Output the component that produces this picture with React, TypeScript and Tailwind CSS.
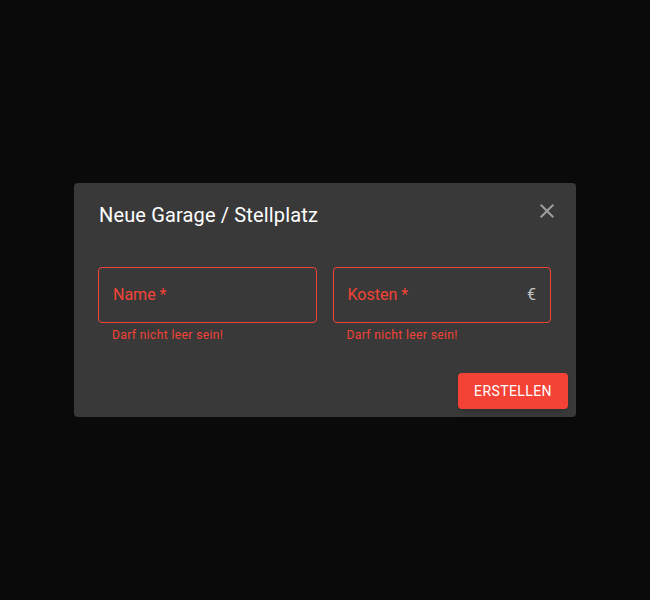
import React from "react";

const font = { fontFamily: "Roboto, 'Liberation Sans', sans-serif" };

const Field = ({ label, adornment }: { label: string; adornment?: string }) => (
  <div className="flex-1">
    <div className="h-[56px] rounded-[4px] border border-[#f44336] flex items-center pl-[14px] pr-[14px]">
      <span className="flex-1 text-[16px] text-[#f44336] leading-none">{label}</span>
      {adornment && <span className="text-[16px] text-[#c4c4c4] leading-none">{adornment}</span>}
    </div>
    <p className="mt-[2px] px-[14px] text-[12px] leading-[20px] tracking-[0.4px] text-[#f44336]">
      Darf nicht leer sein!
    </p>
  </div>
);

export default function App() {
  return (
    <div style={font} className="w-[650px] h-[600px] bg-[#0a0a0a] flex items-center justify-center">
      <div className="relative w-[502px] rounded-[4px] bg-[#393939]">
        <h2 className="pl-[25px] pr-6 py-4 text-[20px] leading-[32px] font-normal text-white tracking-[0.15px]">
          Neue Garage / Stellplatz
        </h2>
        <button className="absolute right-[17px] top-[16px] w-[24px] h-[24px] text-[#9e9e9e]">
          <svg viewBox="0 0 24 24" className="w-6 h-6" fill="currentColor">
            <path d="M19 6.41 17.59 5 12 10.59 6.41 5 5 6.41 10.59 12 5 17.59 6.41 19 12 13.41 17.59 19 19 17.59 13.41 12z" />
          </svg>
        </button>
        <div className="pt-5 pb-5 pl-6 pr-[25px] flex gap-4">
          <Field label="Name *" />
          <Field label="Kosten *" adornment="€" />
        </div>
        <div className="flex justify-end p-2">
          <button className="h-[36px] w-[110px] rounded-[4px] bg-[#f44336] text-white text-[14px] font-normal tracking-[0.4px] uppercase shadow-md">
            Erstellen
          </button>
        </div>
      </div>
    </div>
  );
}
